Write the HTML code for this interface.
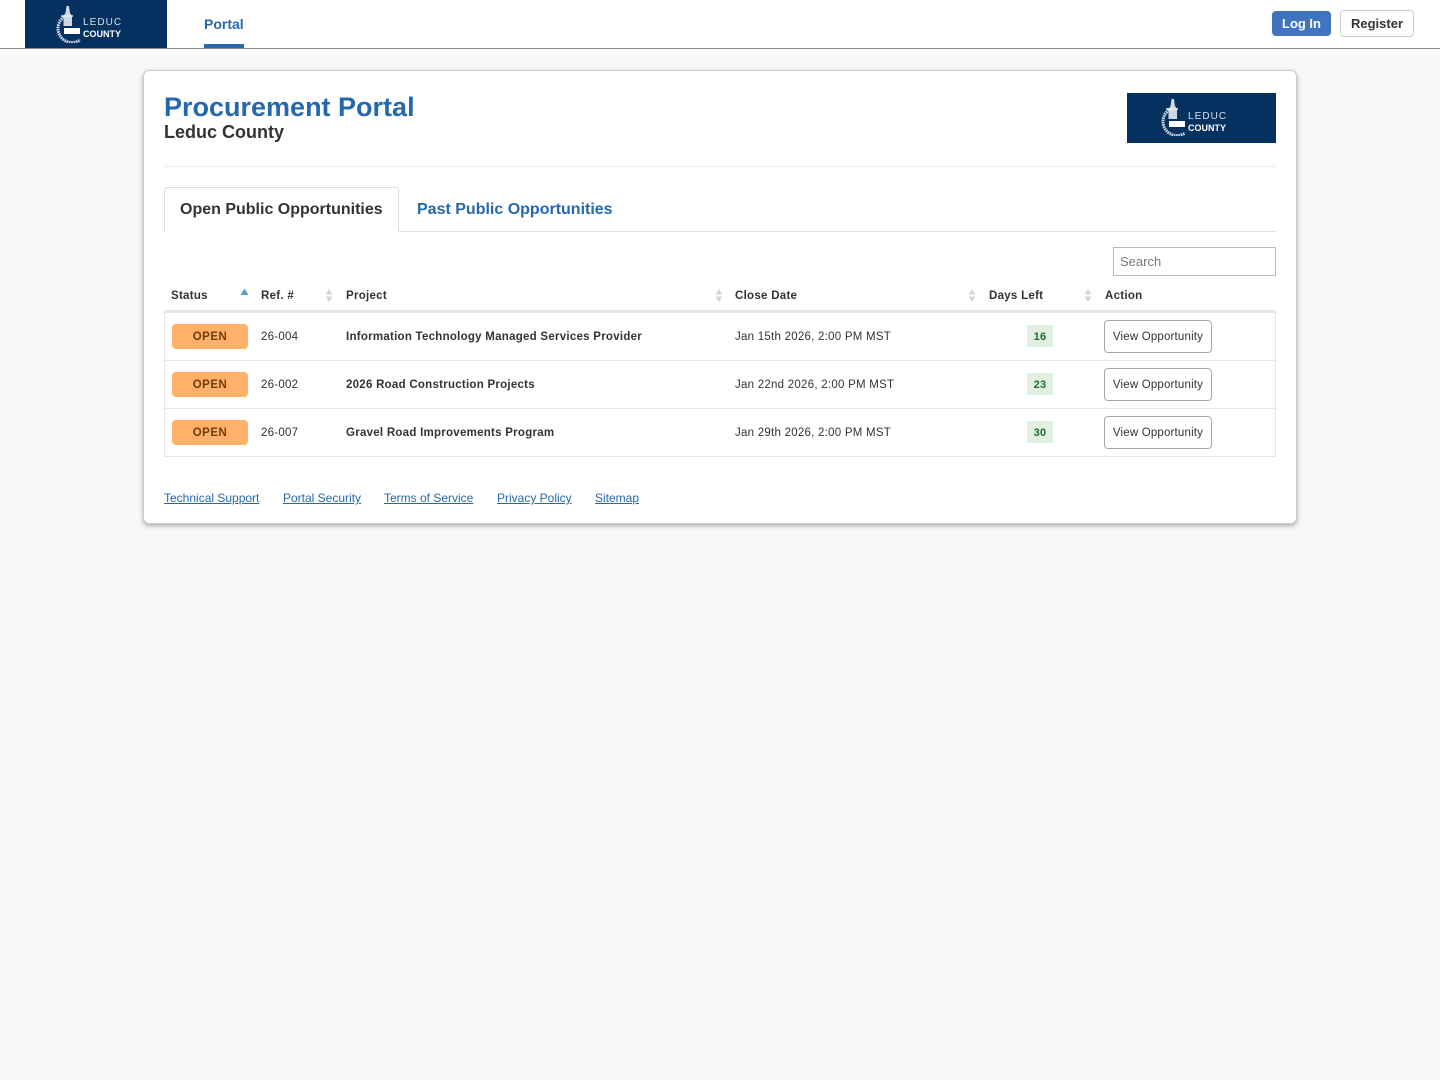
<!DOCTYPE html>
<html lang="en"><head><meta charset="utf-8"><title>Procurement Portal</title>
<style>
*{box-sizing:border-box}
html,body{margin:0;padding:0}
body{width:1440px;height:1080px;background:#f8f8f8;font-family:"Liberation Sans",sans-serif;position:relative;overflow:hidden;color:#333}
.a{position:absolute;white-space:nowrap}
#nav{left:0;top:0;width:1440px;height:49px;background:#fff;border-bottom:1px solid #8f8f8f}
.blue{color:#2568ad}
#card{left:143px;top:70px;width:1154px;height:454px;background:#fff;border:1px solid #ccc;border-radius:6px;box-shadow:0 2px 5px rgba(0,0,0,.3)}
.th{font-size:11.5px;font-weight:bold;letter-spacing:.28px;line-height:14px;top:289px;color:#333}
.td{font-size:11.5px;line-height:14px;color:#333;letter-spacing:.25px}
.b{font-weight:bold;letter-spacing:.26px}
.open{left:172px;width:76px;height:25px;background:#ffb169;border-radius:4px;text-align:center;font-size:11.5px;font-weight:bold;line-height:25px;color:#6b3d0f;letter-spacing:.5px}
.open span,.vo span,.days span{position:relative;top:1px}
.days{left:1027px;width:26px;height:22px;background:#e3efe3;text-align:center;font-size:11px;font-weight:bold;line-height:22px;color:#1e6b2c;letter-spacing:.2px}
.vo{left:1104px;width:108px;height:33px;background:#fff;border:1px solid #a8a8a8;border-radius:4px;text-align:center;font-size:11.5px;line-height:31px;color:#333;letter-spacing:.18px}
.rl{left:165px;width:1110px;height:1px;background:#e6e6e6}
.sort{width:8px;height:14px;top:288px}
.ft{top:491px;font-size:12px;line-height:14px;color:#2568ad;text-decoration:underline}
</style></head><body>
<div class="a" id="nav"></div>
<div class="a" style="left:25px;top:0;width:142px;height:48px;background:#04315f"></div>
<svg class="a" style="left:54px;top:5px" width="70" height="38" viewBox="0 0 70 38">
<path d="M10 12 A13 13 0 1 0 26 35" fill="none" stroke="#cfd8e2" stroke-width="3" stroke-dasharray="1.6 .7"/>
<path d="M12.500 1 L15 1 L16 8 L18 11 L18 21 L9.500 21 L9.500 11 L11.500 8Z" fill="#cfd8e2"/>
<path d="M10 23 H26 V29 H10Z" fill="#fff"/><path d="M7 11H19" stroke="#e8edf2" stroke-width="1.500"/>
<text x="29" y="20" font-family="Liberation Sans" font-size="10" letter-spacing="1.050" fill="#d8e0e8">LEDUC</text>
<text x="29" y="32" font-family="Liberation Sans" font-size="9" font-weight="bold" fill="#fff">COUNTY</text>
</svg>
<div class="a blue" style="left:204px;top:15px;font-size:14px;font-weight:bold;line-height:18px">Portal</div>
<div class="a" style="left:204px;top:44px;width:40px;height:4px;background:#2568ad"></div>
<div class="a" style="left:1272px;top:11px;width:59px;height:25px;background:#3f75c0;border-radius:4px;color:#fff;font-size:13px;font-weight:bold;line-height:25px;text-align:center">Log In</div>
<div class="a" style="left:1340px;top:10px;width:74px;height:27px;background:#fff;border:1px solid #ccc;border-radius:4px;color:#333;font-size:13px;font-weight:bold;line-height:25px;text-align:center">Register</div>

<div class="a" id="card"></div>
<div class="a blue" style="left:164px;top:91px;font-size:27px;font-weight:bold;line-height:32px">Procurement Portal</div>
<div class="a" style="left:164px;top:121px;font-size:18px;font-weight:bold;line-height:23px;color:#333">Leduc County</div>
<div class="a" style="left:1127px;top:93px;width:149px;height:50px;background:#04315f"></div>
<svg class="a" style="left:1158px;top:98px" width="70" height="38" viewBox="0 0 70 38">
<path d="M11 12 A13 13 0 1 0 27 35" fill="none" stroke="#cfd8e2" stroke-width="3" stroke-dasharray="1.6 .7"/>
<path d="M13.500 1 L16 1 L17 8 L19 11 L19 21 L10.500 21 L10.500 11 L12.500 8Z" fill="#cfd8e2"/>
<path d="M11 23 H27 V29 H11Z" fill="#fff"/><path d="M8 11H20" stroke="#e8edf2" stroke-width="1.500"/>
<text x="30" y="21" font-family="Liberation Sans" font-size="10" letter-spacing="1.050" fill="#d8e0e8">LEDUC</text>
<text x="30" y="33" font-family="Liberation Sans" font-size="9" font-weight="bold" fill="#fff">COUNTY</text>
</svg>
<div class="a" style="left:164px;top:166px;width:1112px;height:1px;background:#eee"></div>

<div class="a" style="left:164px;top:231px;width:1112px;height:1px;background:#ddd"></div>
<div class="a" style="left:164px;top:187px;width:235px;height:45px;background:#fff;border:1px solid #ddd;border-bottom:0;border-radius:3px 3px 0 0"></div>
<div class="a" style="left:180px;top:200px;font-size:16px;font-weight:bold;line-height:20px;color:#333">Open Public Opportunities</div>
<div class="a blue" style="left:417px;top:200px;font-size:16px;font-weight:bold;line-height:20px">Past Public Opportunities</div>

<div class="a" style="left:1113px;top:247px;width:163px;height:29px;border:1px solid #bbb;background:#fff;padding-left:6px;font-size:13px;line-height:27px;color:#777">Search</div>

<div class="a th" style="left:171px">Status</div>
<div class="a th" style="left:261px">Ref. #</div>
<div class="a th" style="left:346px">Project</div>
<div class="a th" style="left:735px">Close Date</div>
<div class="a th" style="left:989px">Days Left</div>
<div class="a th" style="left:1105px">Action</div>

<svg class="a" style="left:240px;top:288px" width="9" height="8"><path d="M4.500 0.500L8.500 7H.5Z" fill="#53a3c4"/></svg>
<svg class="a sort" style="left:325px"><path d="M4 1L7.500 6.500H.5Z M4 14L7.500 8.500H.5Z" fill="#d3d6d9"/></svg>
<svg class="a sort" style="left:715px"><path d="M4 1L7.500 6.500H.5Z M4 14L7.500 8.500H.5Z" fill="#d3d6d9"/></svg>
<svg class="a sort" style="left:968px"><path d="M4 1L7.500 6.500H.5Z M4 14L7.500 8.500H.5Z" fill="#d3d6d9"/></svg>
<svg class="a sort" style="left:1084px"><path d="M4 1L7.500 6.500H.5Z M4 14L7.500 8.500H.5Z" fill="#d3d6d9"/></svg>

<div class="a" style="left:164px;top:310px;width:1112px;height:147px;border:1px solid #e6e6e6;border-top:3px solid #e6e6e6"></div>
<div class="a rl" style="top:360px"></div>
<div class="a rl" style="top:408px"></div>

<div class="a open" style="top:324px"><span>OPEN</span></div>
<div class="a td" style="left:261px;top:330px">26-004</div>
<div class="a td b" style="left:346px;top:330px">Information Technology Managed Services Provider</div>
<div class="a td" style="left:735px;top:330px">Jan 15th 2026, 2:00 PM MST</div>
<div class="a days" style="top:325px"><span>16</span></div>
<div class="a vo" style="top:320px"><span>View Opportunity</span></div>

<div class="a open" style="top:372px"><span>OPEN</span></div>
<div class="a td" style="left:261px;top:378px">26-002</div>
<div class="a td b" style="left:346px;top:378px">2026 Road Construction Projects</div>
<div class="a td" style="left:735px;top:378px">Jan 22nd 2026, 2:00 PM MST</div>
<div class="a days" style="top:373px"><span>23</span></div>
<div class="a vo" style="top:368px"><span>View Opportunity</span></div>

<div class="a open" style="top:420px"><span>OPEN</span></div>
<div class="a td" style="left:261px;top:426px">26-007</div>
<div class="a td b" style="left:346px;top:426px">Gravel Road Improvements Program</div>
<div class="a td" style="left:735px;top:426px">Jan 29th 2026, 2:00 PM MST</div>
<div class="a days" style="top:421px"><span>30</span></div>
<div class="a vo" style="top:416px"><span>View Opportunity</span></div>

<div class="a ft" style="left:164px">Technical Support</div>
<div class="a ft" style="left:283px">Portal Security</div>
<div class="a ft" style="left:384px">Terms of Service</div>
<div class="a ft" style="left:497px">Privacy Policy</div>
<div class="a ft" style="left:595px">Sitemap</div>
</body></html>
